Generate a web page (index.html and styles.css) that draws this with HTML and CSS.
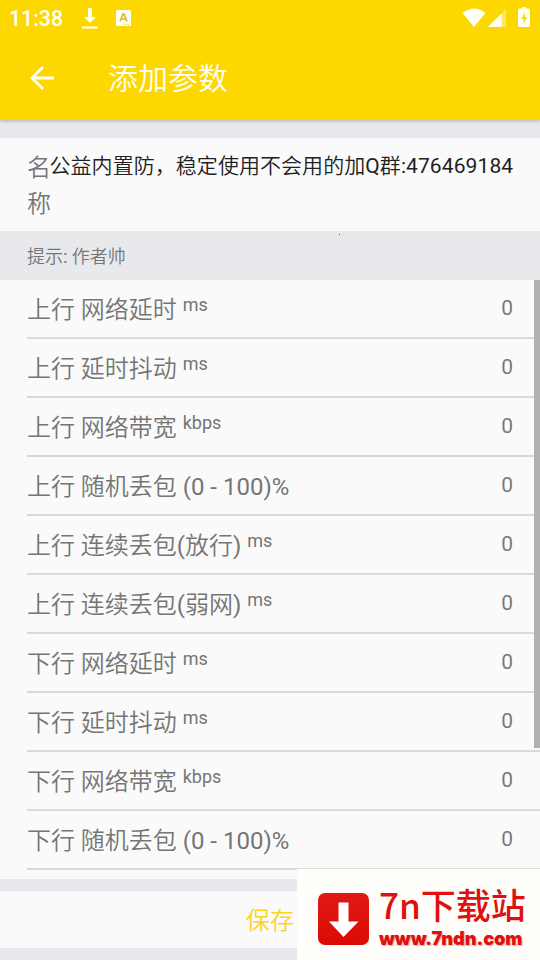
FILE: index.html
```
<!DOCTYPE html>
<html lang="zh-CN">
<head>
<meta charset="utf-8">
<title>添加参数</title>
<link rel="stylesheet" href="styles.css">
</head>
<body>
<header class="header">
  <div class="status">
    <span class="clock">11:38</span>
    <svg class="download" width="16" height="21" viewBox="0 0 16 21" fill="currentColor"><path d="M6 0h4v9h4l-6 6-6-6h4zM0 18.500h16v2H0z"/></svg>
    <svg class="notice" width="15" height="16" viewBox="0 0 15 16"><rect width="15" height="16" rx="1.500" fill="currentColor"/><path d="M4 11.500 7 4h1l3 7.500M5.400 9h4.200" fill="none" stroke="#d7b82d" stroke-width="1.700"/><path d="M8 14.200h6" stroke="#d7b82d" stroke-dasharray="1 1"/></svg>
    <span class="spacer"></span>
    <svg class="wifi" width="24" height="19" viewBox="0 0 24 19" fill="currentColor"><path d="M.5 5Q12-4 23.500 5L12 19z"/></svg>
    <svg class="signal" width="18" height="18" viewBox="0 0 18 18" fill="currentColor"><path d="M18 0v18H0z" opacity=".4"/><path d="M13.500 4.500V18H0z"/></svg>
    <svg class="battery" width="12" height="20" viewBox="0 0 12 20"><path d="M4 0h4v1.500h2.500Q12 2 12 3.500v15Q12 20 10.500 20h-9Q0 20 0 18.500v-15Q0 2 1.500 1.500H4z" fill="currentColor"/><path d="M7 5 3.500 12h2v5L9 10H6.500z" fill="#fdd800"/></svg>
  </div>
  <div class="toolbar">
    <svg width="24" height="24" viewBox="0 0 24 24" fill="none" stroke="currentColor" stroke-width="2.800"><path d="M13 1 2 12l11 11M2 12h22"/></svg>
    <h1>添加参数</h1>
  </div>
</header>
<main>
  <section class="name"><span class="name-label">名称</span><span class="name-value">公益内置防，稳定使用不会用的加<span class="latin">Q</span>群<span class="latin">:476469184</span></span></section>
  <p class="hint">提示<span class="latin">: </span>作者帅<span class="speck"></span></p>
  <section class="list">
    <div class="row"><span>上行 网络延时 <small>ms</small></span><b>0</b></div>
    <div class="row"><span>上行 延时抖动 <small>ms</small></span><b>0</b></div>
    <div class="row"><span>上行 网络带宽 <small>kbps</small></span><b>0</b></div>
    <div class="row"><span>上行 随机丢包 <span class="latin">(0 - 100)%</span></span><b>0</b></div>
    <div class="row"><span>上行 连续丢包<span class="latin">(</span>放行<span class="latin">)</span> <small>ms</small></span><b>0</b></div>
    <div class="row"><span>上行 连续丢包<span class="latin">(</span>弱网<span class="latin">)</span> <small>ms</small></span><b>0</b></div>
    <div class="row"><span>下行 网络延时 <small>ms</small></span><b>0</b></div>
    <div class="row"><span>下行 延时抖动 <small>ms</small></span><b>0</b></div>
    <div class="row"><span>下行 网络带宽 <small>kbps</small></span><b>0</b></div>
    <div class="row"><span>下行 随机丢包 <span class="latin">(0 - 100)%</span></span><b>0</b></div>
    <i class="scrollbar"></i>
  </section>
  <div class="save">保存</div>
</main>
<aside class="brand">
  <svg width="51" height="52" viewBox="0 0 51 52"><defs><linearGradient id="red" x2="0" y2="1"><stop stop-color="#e01a15"/><stop offset="1" stop-color="#dc0a05"/></linearGradient></defs><rect width="51" height="52" rx="7" fill="url(#red)"/><path d="M20.500 9.500h10v19h10L25.500 44 11 28.500h9.500z" fill="#fff"/></svg>
  <div class="brand-text"><span class="brand-name">7n下载站</span><span class="brand-url">www.7ndn.com</span></div>
</aside>
</body>
</html>
```
FILE: styles.css
```
* { box-sizing: border-box; }
body {
  margin: 0;
  width: 540px;
  height: 960px;
  overflow: hidden;
  position: relative;
  background: #e8e9ed;
  color: #757575;
  font-family: Roboto, "Noto Sans CJK SC", sans-serif;
  font-weight: 350;
}
.latin { font-weight: 400; }
.header {
  height: 120px;
  background: #fdd800;
  color: #fffff5;
  box-shadow: 0 1px 3px rgba(0, 0, 0, .25);
}
.status { height: 36px; display: flex; align-items: flex-start; padding: 0 10px 0 9px; }
.clock { width: 73px; font-size: 21.300px; font-weight: 500; line-height: 38px; }
.download { margin-top: 8px; }
.notice { margin: 10px 0 0 18px; }
.spacer { flex: 1; }
.wifi { margin-top: 8px; }
.signal { margin: 9px 12px 0 2px; }
.battery { margin-top: 7px; }
.toolbar { height: 84px; display: flex; align-items: center; padding-left: 30px; }
.toolbar h1 { margin: 2px 0 0 54px; font-size: 30px; font-weight: 350; line-height: 44px; }
main { padding-top: 18px; }
.name { height: 93px; display: flex; padding: 12px 0 0 27px; background: #fafafa; }
.name-label { width: 24px; margin-right: -1.500px; font-size: 24px; line-height: 36px; }
.name-value { color: #212121; font-size: 21px; line-height: 33px; white-space: nowrap; letter-spacing: .05px; }
.name-value .latin { letter-spacing: .1px; }
.hint { height: 49px; margin: 0; padding-left: 27px; font-size: 18px; line-height: 52px; position: relative; }
.speck { position: absolute; left: 339px; top: 3px; width: 1px; height: 1px; background: #555; }
.list { height: 599px; padding-left: 27px; background: #fafafa; position: relative; }
.row {
  height: 59px;
  display: flex;
  justify-content: space-between;
  border-bottom: 2px solid #d9d9d9;
  padding-right: 27px;
  font-size: 24px;
  line-height: 60px;
  white-space: nowrap;
}
.row small { font-size: 18px; font-weight: 400; line-height: 1; position: relative; top: -7px; }
.row b { font-size: 21px; font-weight: 400; line-height: 56px; color: #7a7a7a; }
.scrollbar { position: absolute; right: 0; top: 0; width: 6px; height: 468px; background: #b0b0b0; }
.save { height: 57px; margin-top: 12px; background: #fafafa; color: #fdd31c; font-size: 24px; line-height: 60px; text-align: center; }
.brand {
  position: absolute;
  right: 0;
  bottom: 0;
  width: 243px;
  height: 92px;
  display: flex;
  padding: 24px 0 0 21px;
  background: #fffefa;
  border-top: 1px solid #ddd;
}
.brand-text { display: flex; flex-direction: column; margin: -13px 0 0 10px; color: #df1010; white-space: nowrap; }
.brand-name { font-family: "Noto Sans CJK SC", sans-serif; font-size: 35px; font-weight: 500; line-height: 48px; }
.brand-url { font-family: Inter, sans-serif; font-size: 18.100px; font-weight: 900; line-height: 20px; text-shadow: 1px 1px 1px #f3a6a6; }
```
